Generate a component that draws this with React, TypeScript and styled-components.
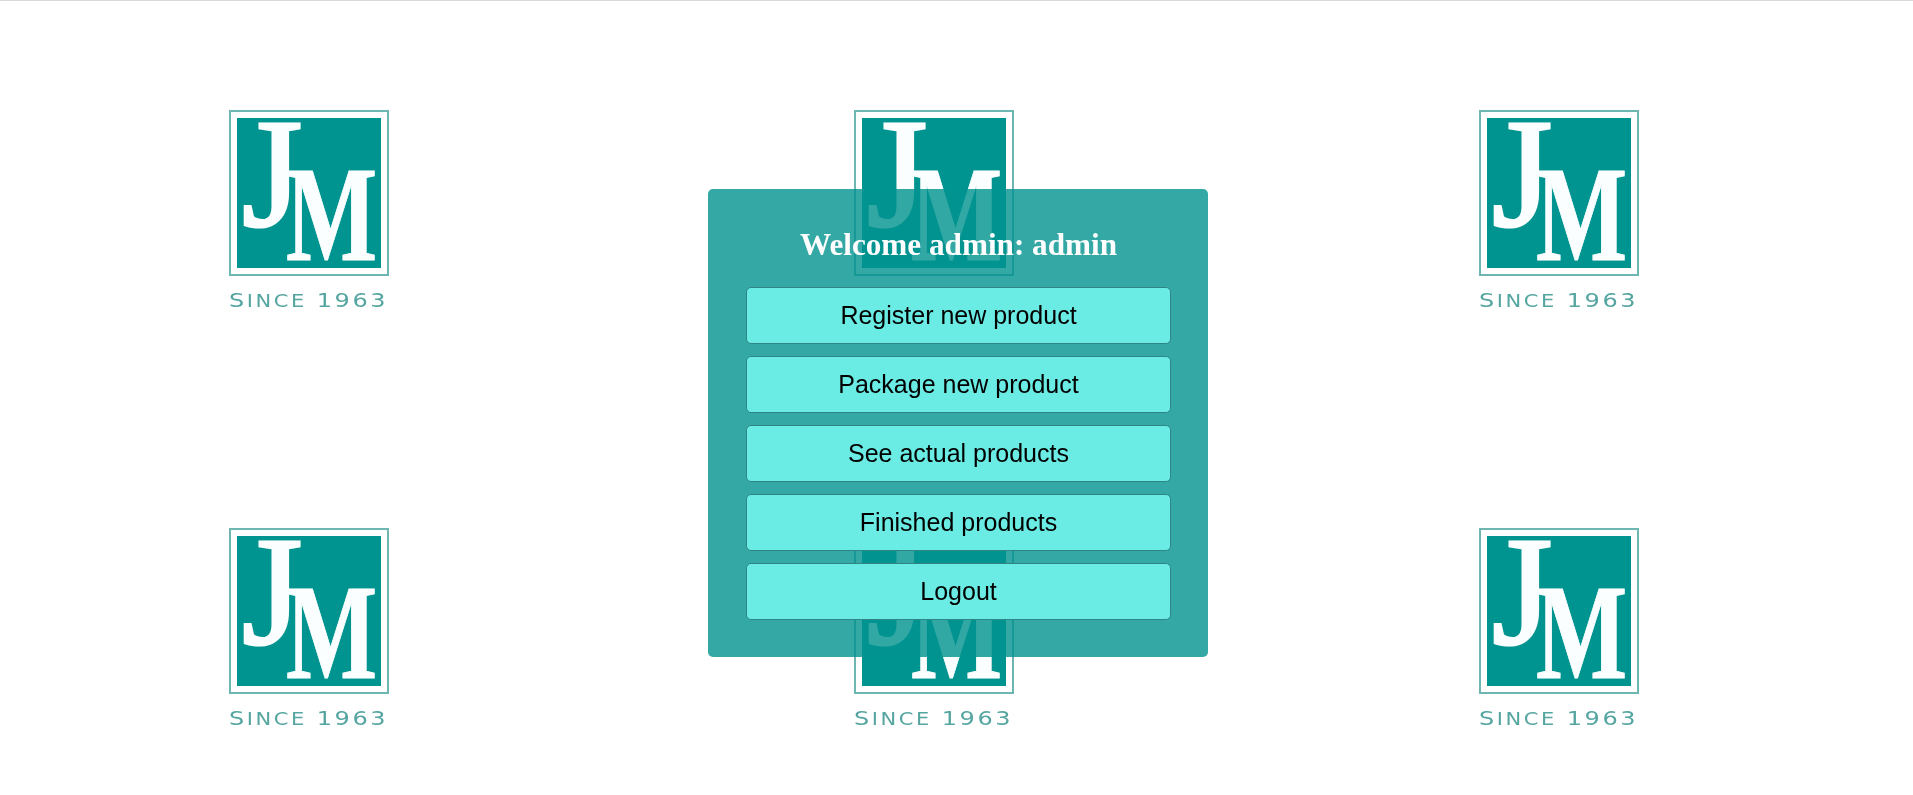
import React from 'react';
import styled, { createGlobalStyle } from 'styled-components';

const GlobalStyle = createGlobalStyle`
  html, body {
    margin: 0;
    padding: 0;
    background: #fff;
  }
`;

const Page = styled.div`
  position: relative;
  height: 795px;
  box-sizing: border-box;
  border-top: 1px solid #d9d9d9;
  overflow: hidden;
`;

const Wallpaper = styled.div`
  position: absolute;
  top: 0;
  left: 0;
  display: grid;
  grid-template-columns: repeat(3, 625px);
  grid-auto-rows: 418px;
`;

const Tile = styled.div`
  padding: 109px 0 0 229px;
`;

const Logo = styled.div`
  width: 162px;
  filter: blur(0.5px);
`;

const LogoFrame = styled.div`
  box-sizing: border-box;
  width: 160px;
  height: 166px;
  border: 2px solid #6db6b2;
  padding: 6px;
`;

const LogoMark = styled.svg`
  display: block;
  width: 144px;
  height: 150px;
  background: #009490;
`;

const MarkLetter = styled.text<{ $weight: number; $stroke: number }>`
  font-family: 'Liberation Serif', serif;
  font-weight: ${(p) => p.$weight};
  fill: #fbfefe;
  stroke: #fbfefe;
  stroke-width: ${(p) => p.$stroke}px;
`;

const LogoCaption = styled.div`
  margin-top: 13px;
  font-family: 'DejaVu Sans', sans-serif;
  font-size: 20px;
  line-height: 22px;
  letter-spacing: 2.1px;
  white-space: nowrap;
  color: #55a5a1;
  transform: scaleX(1.2);
  transform-origin: left center;
`;

const CaptionSmall = styled.span`
  font-size: 17.5px;
`;

const Panel = styled.div`
  position: relative;
  box-sizing: border-box;
  width: 500px;
  height: 468px;
  margin: 188px 0 0 708px;
  padding: 38px 37px 38px 38px;
  background: rgba(0, 146, 142, 0.8);
  border-radius: 5px;
`;

const Title = styled.h1`
  margin: 0 0 24px;
  font-family: 'Liberation Serif', 'Times New Roman', serif;
  font-size: 31.2px;
  line-height: 36px;
  font-weight: 700;
  text-align: center;
  color: #fff;
`;

const Menu = styled.div`
  display: flex;
  flex-direction: column;
  gap: 12px;
`;

const MenuButton = styled.button`
  box-sizing: border-box;
  width: 100%;
  height: 57px;
  padding: 0;
  background: #6aebe4;
  border: 1px solid #2f8583;
  border-radius: 5px;
  font-family: 'Liberation Sans', Arial, sans-serif;
  font-size: 25px;
  color: #000;
  cursor: pointer;
`;

const menuItems = [
  'Register new product',
  'Package new product',
  'See actual products',
  'Finished products',
  'Logout',
];

const JmLogo = () => (
  <Logo>
    <LogoFrame>
      <LogoMark viewBox='0 0 144 150'>
        <MarkLetter x='5' y='107' fontSize='155' $weight={400} $stroke={3}>
          J
        </MarkLetter>
        <MarkLetter
          transform='translate(49 142) scale(0.71 1)'
          fontSize='136'
          $weight={700}
          $stroke={1}
        >
          M
        </MarkLetter>
      </LogoMark>
    </LogoFrame>
    <LogoCaption>
      S<CaptionSmall>INCE</CaptionSmall> 1963
    </LogoCaption>
  </Logo>
);

const App = () => {
  return (
    <Page>
      <GlobalStyle />
      <Wallpaper>
        {Array.from({ length: 6 }, (_, i) => (
          <Tile key={i}>
            <JmLogo />
          </Tile>
        ))}
      </Wallpaper>
      <Panel>
        <Title>Welcome admin: admin</Title>
        <Menu>
          {menuItems.map((item) => (
            <MenuButton key={item}>{item}</MenuButton>
          ))}
        </Menu>
      </Panel>
    </Page>
  );
};

export default App;
